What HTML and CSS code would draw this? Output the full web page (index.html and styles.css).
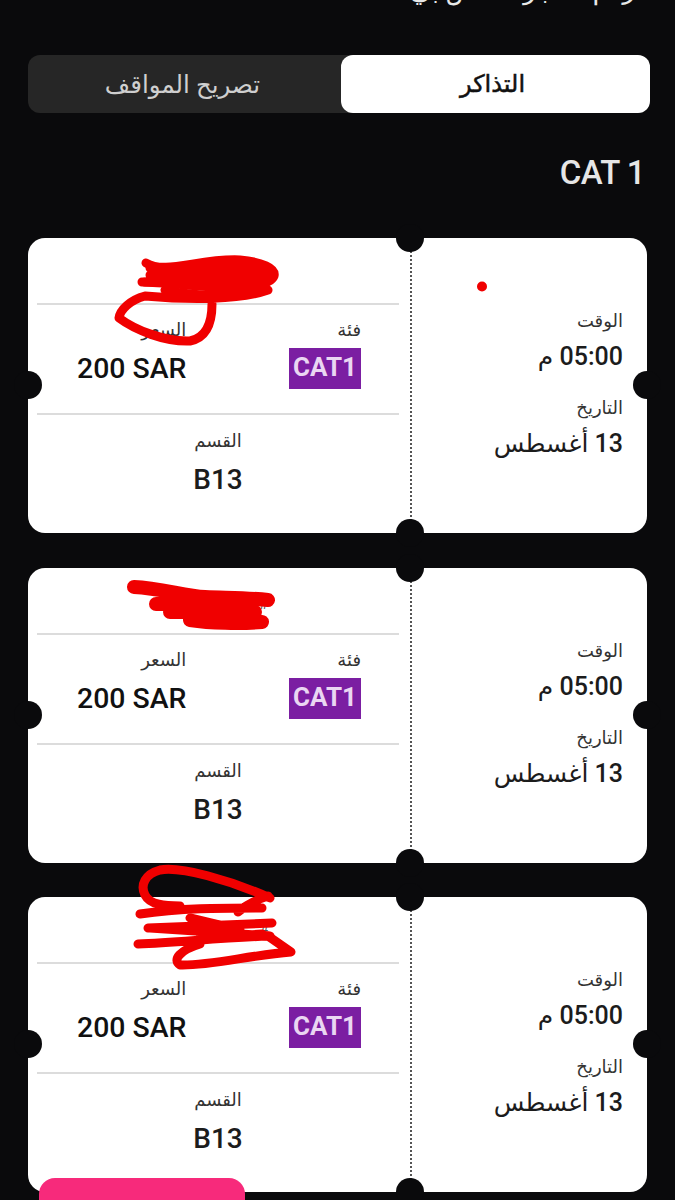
FILE: index.html
```html
<!DOCTYPE html>
<html lang="ar">
<head>
    <meta charset="UTF-8">
    <meta name="viewport" content="width=device-width, initial-scale=1.0">
    <title>التذاكر</title>
    <link rel="stylesheet" href="styles.css">
</head>
<body>
    <div class="page" dir="rtl">
        <h1 class="page-title">رقم الحجز الخاص بي</h1>

        <div class="tabs">
            <div class="tab active">التذاكر</div>
            <div class="tab">تصريح المواقف</div>
        </div>

        <h2 class="category">CAT 1</h2>

        <div class="ticket">
            <span class="notch notch-top"></span>
            <span class="notch notch-bottom"></span>
            <span class="notch notch-right"></span>
            <span class="notch notch-left"></span>
            <div class="stub">
                <div class="label">الوقت</div>
                <div class="value">05:00 م</div>
                <div class="label label-gap">التاريخ</div>
                <div class="value">13 أغسطس</div>
            </div>
            <div class="info">
                <div class="info-top"><span class="ticket-no">#</span></div>
                <div class="info-mid">
                    <div class="field">
                        <div class="label">فئة</div>
                        <div class="badge">CAT1</div>
                    </div>
                    <div class="field">
                        <div class="label">السعر</div>
                        <div class="value" dir="ltr">200 SAR</div>
                    </div>
                </div>
                <div class="info-bottom">
                    <div class="label">القسم</div>
                    <div class="value">B13</div>
                </div>
            </div>
        </div>

        <div class="ticket">
            <span class="notch notch-top"></span>
            <span class="notch notch-bottom"></span>
            <span class="notch notch-right"></span>
            <span class="notch notch-left"></span>
            <div class="stub">
                <div class="label">الوقت</div>
                <div class="value">05:00 م</div>
                <div class="label label-gap">التاريخ</div>
                <div class="value">13 أغسطس</div>
            </div>
            <div class="info">
                <div class="info-top"><span class="ticket-no">#</span></div>
                <div class="info-mid">
                    <div class="field">
                        <div class="label">فئة</div>
                        <div class="badge">CAT1</div>
                    </div>
                    <div class="field">
                        <div class="label">السعر</div>
                        <div class="value" dir="ltr">200 SAR</div>
                    </div>
                </div>
                <div class="info-bottom">
                    <div class="label">القسم</div>
                    <div class="value">B13</div>
                </div>
            </div>
        </div>

        <div class="ticket">
            <span class="notch notch-top"></span>
            <span class="notch notch-bottom"></span>
            <span class="notch notch-right"></span>
            <span class="notch notch-left"></span>
            <div class="stub">
                <div class="label">الوقت</div>
                <div class="value">05:00 م</div>
                <div class="label label-gap">التاريخ</div>
                <div class="value">13 أغسطس</div>
            </div>
            <div class="info">
                <div class="info-top"><span class="ticket-no">#</span></div>
                <div class="info-mid">
                    <div class="field">
                        <div class="label">فئة</div>
                        <div class="badge">CAT1</div>
                    </div>
                    <div class="field">
                        <div class="label">السعر</div>
                        <div class="value" dir="ltr">200 SAR</div>
                    </div>
                </div>
                <div class="info-bottom">
                    <div class="label">القسم</div>
                    <div class="value">B13</div>
                </div>
            </div>
        </div>

        <div class="pink-button"></div>

        <!-- red marker scribbles drawn over the screenshot -->
        <svg class="scribbles" width="675" height="1200" viewBox="0 0 675 1200">
            <circle cx="482" cy="286.500" r="5" fill="#f00000" stroke="none"/>
            <path d="M146 263 C165 275 200 258 240 260 C262 262 276 268 274 276 C270 286 240 290 200 286 C175 284 155 282 142 282"/>
            <path d="M150 268 L265 268 M150 275 L268 276 M145 282 L265 284 M165 290 C200 298 235 296 266 288"/>
            <path d="M268 290 C240 300 190 300 145 296 C130 300 120 310 119 318 C135 330 165 342 190 341 C205 338 212 325 212 304"/>

            <path class="thick" d="M134 587 C160 588 185 596 205 597 C230 598 250 598 268 600"/>
            <path class="thick" d="M156 604 L250 604 M170 612 L255 612 M190 620 C210 623 240 624 262 622"/>

            <path d="M270 898 C230 880 180 866 160 870 C145 874 140 885 145 895 C150 905 165 906 180 906"/>
            <path d="M140 914 C180 908 220 908 262 908 M268 896 C255 900 245 906 238 912"/>
            <path d="M148 928 L272 923 M150 928 L270 936 M190 918 L240 930 M200 938 L262 934"/>
            <path d="M138 944 C180 942 220 938 268 936 L291 952 C250 955 210 966 180 965 C172 960 180 950 200 944"/>
        </svg>
    </div>
</body>
</html>
```

FILE: styles.css
```css
* {
    margin: 0;
    padding: 0;
    box-sizing: border-box;
}

body {
    font-family: Roboto, "DejaVu Sans", sans-serif;
    background: #0a0a0c;
    width: 675px;
    height: 1200px;
    overflow: hidden;
}

.page {
    position: relative;
    height: 1200px;
    overflow: hidden;
    padding: 0 25px 0 28px;
}

.page-title {
    height: 55px;
    margin-top: -23px;
    margin-bottom: 23px;
    padding-right: 15px;
    font-size: 26px;
    font-weight: 400;
    line-height: 26px;
    color: #e8e8e8;
}

.tabs {
    display: flex;
    height: 58px;
    background: #262626;
    border-radius: 12px;
}

.tab {
    flex: 1;
    display: flex;
    align-items: center;
    justify-content: center;
    padding-right: 4px;
    font-size: 24.500px;
    color: #cfcfcf;
    border-radius: 12px;
}

.tab.active {
    flex: 0 0 309px;
    padding-right: 6px;
    font-size: 24px;
    background: #fff;
    color: #111;
    -webkit-text-stroke: 0.5px #111;
}

.category {
    margin-top: 40px;
    height: 85px;
    padding-right: 5px;
    font-size: 33px;
    line-height: 40px;
    font-weight: 500;
    color: #e6e6e6;
    text-align: right;
    letter-spacing: -0.5px;
}

.ticket {
    position: relative;
    display: flex;
    width: 619px;
    height: 295px;
    margin-bottom: 34.500px;
    margin-right: 3px;
    background: #fff;
    border-radius: 17px;
    color: #1a1a1a;
}

.notch {
    position: absolute;
    width: 28px;
    height: 28px;
    border-radius: 50%;
    background: #0a0a0c;
}

.notch-top {
    top: -14px;
    left: 368px;
}

.notch-bottom {
    bottom: -14px;
    left: 368px;
}

.notch-left {
    top: 133px;
    left: -14px;
}

.notch-right {
    top: 133px;
    right: -14px;
}

.stub {
    flex: 0 0 237px;
    display: flex;
    flex-direction: column;
    padding: 71px 24px 0 0;
    border-left: 2px dotted #555;
}

.label {
    font-size: 18px;
    line-height: 24px;
    color: #333;
}

.label-gap {
    margin-top: 21px;
}

.value {
    font-size: 25px;
    line-height: 36px;
    font-weight: 500;
    margin-top: 6px;
    color: #1c1c1c;
}

.info {
    flex: 1;
    padding: 0 11px 0 9px;
    display: flex;
    flex-direction: column;
}

.info-top {
    height: 67px;
    padding: 26px 131px 0 0;
    border-bottom: 2px solid #dcdcdc;
}

.ticket-no {
    display: block;
    font-size: 15px;
    line-height: 20px;
    color: #555;
}

.info-mid {
    height: 110px;
    display: flex;
    justify-content: space-between;
    padding: 13px 38px 0 40px;
    border-bottom: 2px solid #dcdcdc;
}

.field {
    display: flex;
    flex-direction: column;
}

.field .value {
    font-size: 28.400px;
    margin-top: 9px;
    color: #111;
}

.badge {
    width: 72px;
    height: 41px;
    margin-top: 6px;
    background: #7b1ea2;
    color: #ead6f2;
    font-size: 26px;
    font-weight: 700;
    line-height: 38px;
    text-align: center;
}

.info-bottom {
    display: flex;
    flex-direction: column;
    align-items: center;
    padding-top: 14px;
}

.info-bottom .value {
    font-size: 28px;
    margin-top: 9px;
}

.pink-button {
    position: absolute;
    left: 39px;
    top: 1178px;
    width: 206px;
    height: 60px;
    background: #f72a7b;
    border-radius: 16px;
}

.scribbles {
    position: absolute;
    top: 0;
    left: 0;
    fill: none;
    stroke: #f00000;
    stroke-width: 9;
    stroke-linecap: round;
    stroke-linejoin: round;
    pointer-events: none;
}

.scribbles .thick {
    stroke-width: 14;
}
```
